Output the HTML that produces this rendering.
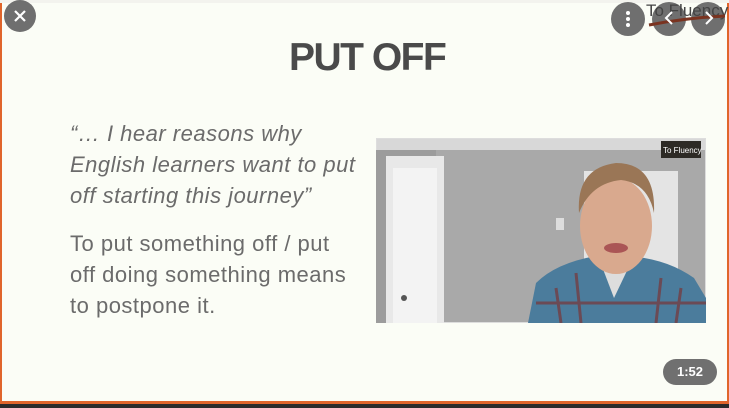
<!DOCTYPE html>
<html><head><style>
body{margin:0;width:729px;height:408px;overflow:hidden;background:#2b2b2b;font-family:"Liberation Sans",sans-serif;position:relative}
.slide{position:absolute;left:0;top:0;width:725px;height:401px;background:#fbfdf6;border-left:2px solid #e0652b;border-right:2px solid #e0652b;border-bottom:3px solid #e0652b}
.t{position:absolute;color:#6b6b6b;font-size:22px;letter-spacing:0.5px;line-height:31px}
.btn{position:absolute;border-radius:50%;background:#6f6f6f}
</style></head><body>
<div class="slide"></div>
<div style="position:absolute;left:0;top:0;width:729px;height:3px;background:#f3f3ee"></div>
<div class="btn" style="left:4px;top:0;width:32px;height:32px"></div>
<svg style="position:absolute;left:4px;top:0" width="32" height="32"><path d="M11 11L21 21M21 11L11 21" stroke="#fff" stroke-width="2.2"/></svg>
<div style="position:absolute;left:289px;top:36px;font-size:39px;font-weight:bold;color:#4a4a4a;letter-spacing:-1.5px">PUT OFF</div>
<div class="t" style="left:70px;top:118px;font-style:italic">“… I hear reasons why<br>English learners want to put<br>off starting this journey”</div>
<div class="t" style="left:70px;top:228px">To put something off / put<br>off doing something means<br>to postpone it.</div>
<svg style="position:absolute;left:376px;top:138px" width="330" height="185">
<rect width="330" height="185" fill="#a9a9a9" stroke="#ddd" stroke-width="2"/>
<rect x="1" y="1" width="328" height="11" fill="#d8d8d8"/>
<rect x="0" y="12" width="60" height="173" fill="#9c9c9c"/>
<rect x="10" y="18" width="58" height="167" fill="#e8e8e8"/>
<rect x="17" y="30" width="44" height="155" fill="#f3f3f3"/>
<circle cx="28" cy="160" r="3" fill="#555"/>
<rect x="208" y="33" width="94" height="107" fill="#e4e4e4"/>
<rect x="180" y="80" width="8" height="12" fill="#ddd"/>
<path d="M152 185 L160 145 Q180 125 220 118 L250 118 Q290 120 318 140 L330 160 L330 185Z" fill="#4b7c9c"/>
<path d="M180 150 L185 185 M200 135 L205 185 M285 140 L280 185 M305 150 L300 185 M160 165 L330 165" stroke="#6b4a55" stroke-width="3"/>
<path d="M222 118 L238 160 L258 118Z" fill="#ddd"/>
<ellipse cx="240" cy="88" rx="36" ry="48" fill="#d9a98e"/>
<path d="M203 75 Q200 30 240 25 Q280 25 278 75 Q272 45 245 42 Q215 45 203 75Z" fill="#9a7656"/>
<ellipse cx="240" cy="110" rx="12" ry="5" fill="#a55"/>
<rect x="285" y="3" width="40" height="17" fill="#2d2a25"/>
<text x="287" y="15" font-size="8" fill="#fff" font-family="Liberation Sans">To Fluency</text>
</svg>
<div class="btn" style="left:611px;top:2px;width:34px;height:34px"></div>
<div style="position:absolute;left:626px;top:11px;width:4px;height:4px;border-radius:2px;background:#fff;box-shadow:0 6px 0 #fff,0 12px 0 #fff"></div>
<div class="btn" style="left:652px;top:2px;width:34px;height:34px"></div>
<div class="btn" style="left:691px;top:2px;width:34px;height:34px"></div>
<div style="position:absolute;left:646px;top:1px;font-size:17px;color:#444">To Fluency</div>
<svg style="position:absolute;left:645px;top:0" width="84" height="36"><path d="M4 25 Q40 18 80 16" stroke="#7a3320" stroke-width="3" fill="none"/><path d="M27 12L21 18L27 24M61 12L67 18L61 24" stroke="#fff" stroke-width="2" fill="none"/></svg>
<div style="position:absolute;left:663px;top:359px;width:54px;height:26px;border-radius:13px;background:#707070;color:#fff;font-size:13px;font-weight:bold;text-align:center;line-height:26px">1:52</div>
</body></html>
